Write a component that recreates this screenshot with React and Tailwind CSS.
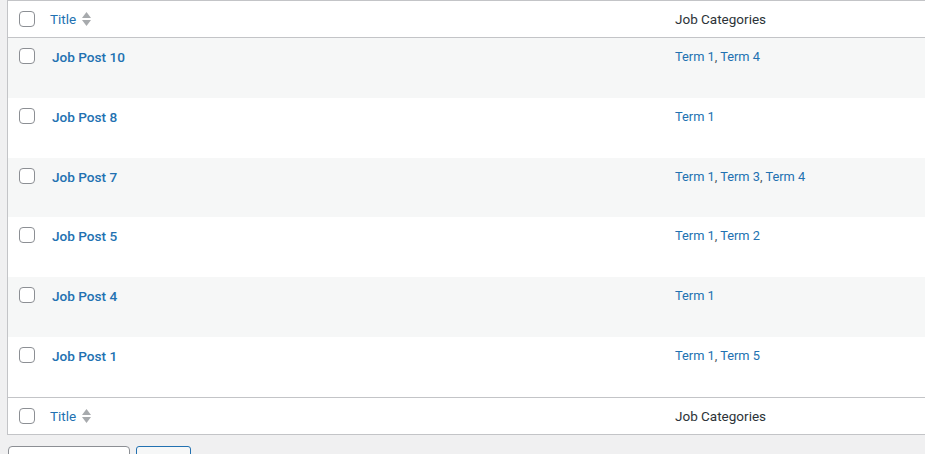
const posts = [
  { title: 'Job Post 10', terms: ['Term 1', 'Term 4'] },
  { title: 'Job Post 8', terms: ['Term 1'] },
  { title: 'Job Post 7', terms: ['Term 1', 'Term 3', 'Term 4'] },
  { title: 'Job Post 5', terms: ['Term 1', 'Term 2'] },
  { title: 'Job Post 4', terms: ['Term 1'] },
  { title: 'Job Post 1', terms: ['Term 1', 'Term 5'] },
]

function CheckBox() {
  return <span className="block w-4 h-4 rounded-[4px] border border-[#8c8f94] bg-white" />
}

function SortIcon() {
  return (
    <svg width="11" height="18" viewBox="0 0 11 18" className="ml-[5px] fill-[#a7aaad]">
      <path d="M1 8 L5.5 2 L10 8 Z" />
      <path d="M1 10 L10 10 L5.5 16 Z" />
    </svg>
  )
}

function HeadRow({ edge }) {
  return (
    <div className={`flex h-[37px] items-center bg-white ${edge}`}>
      <div className="w-[42px] shrink-0 pl-[11px]">
        <CheckBox />
      </div>
      <div className="flex w-[625px] shrink-0 items-center text-[13.5px] text-[#2271b1]">
        Title
        <SortIcon />
      </div>
      <div className="text-[13.5px] text-[#2c3338]">Job Categories</div>
    </div>
  )
}

export default function App() {
  return (
    <div className="h-[454px] bg-[#f0f0f1] pl-[7px] overflow-hidden" style={{ fontFamily: 'Roboto, "Noto Sans", sans-serif' }}>
      <div className="w-[1100px] border border-[#c3c4c7]">
        <HeadRow edge="border-b border-[#c3c4c7]" />
        {posts.map((post, i) => (
          <div key={post.title} className={`flex h-[59.8px] items-start pt-[10px] ${i % 2 === 0 ? 'bg-[#f6f7f7]' : 'bg-white'}`}>
            <div className="w-[42px] shrink-0 pl-[11px]">
              <CheckBox />
            </div>
            <div className="w-[625px] shrink-0 pl-[2px] text-[13.6px] font-medium leading-[18px] text-[#2271b1]">
              {post.title}
            </div>
            <div className="text-[12.8px] leading-[18px] text-[#2271b1]">
              {post.terms.map((t, j) => (
                <span key={t}>
                  {t}
                  {j < post.terms.length - 1 && <span className="text-[#50575e]">, </span>}
                </span>
              ))}
            </div>
          </div>
        ))}
        <HeadRow edge="border-t border-[#c3c4c7]" />
      </div>
      <div className="mt-[11px] flex gap-[6px] pl-px">
        <div className="h-8 w-[122px] rounded-[4px] border border-[#8c8f94] bg-white" />
        <div className="h-8 w-[55px] rounded-[3px] border border-[#2271b1] bg-[#f6f7f7]" />
      </div>
    </div>
  )
}
